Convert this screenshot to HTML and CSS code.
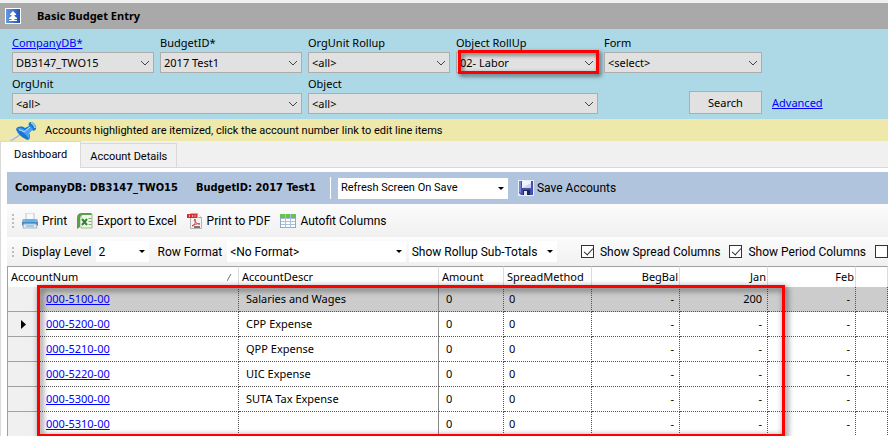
FILE: index.html
```html
<!DOCTYPE html>
<html lang="en">
<head>
<meta charset="utf-8">
<title>Basic Budget Entry</title>
<link rel="stylesheet" href="styles.css">
</head>
<body>
<header class="titlebar">
  <button class="collapse" type="button" aria-label="Collapse search panel">
    <svg width="16" height="16" viewBox="0 0 16 16">
      <defs><linearGradient id="blue" x1="0" y1="0" x2="1" y2="0"><stop offset="0" stop-color="#6a9be4"/><stop offset="1" stop-color="#1d4fb4"/></linearGradient></defs>
      <rect x="0.5" y="0.5" width="15" height="15" fill="url(#blue)" stroke="#fff"/>
      <path d="M8 3l3 3v1H9.500v1L12 10v1H9.500v1H12v1H4v-1h2.500v-1H4v-1l2.500-2V7H5V6z" fill="#fff"/>
    </svg>
  </button>
  <h1 class="title">Basic Budget Entry</h1>
</header>

<form class="search">
  <div class="field">
    <label for="company"><a href="#company">CompanyDB*</a></label>
    <div class="combo"><select id="company"><option>DB3147_TWO15</option></select><svg class="chev" viewBox="0 0 10 6"><path d="M1 1l4 4 4-4"/></svg></div>
  </div>
  <div class="field">
    <label for="budget">BudgetID*</label>
    <div class="combo"><select id="budget"><option>2017 Test1</option></select><svg class="chev" viewBox="0 0 10 6"><path d="M1 1l4 4 4-4"/></svg></div>
  </div>
  <div class="field">
    <label for="orgroll">OrgUnit Rollup</label>
    <div class="combo"><select id="orgroll"><option>&lt;all&gt;</option></select><svg class="chev" viewBox="0 0 10 6"><path d="M1 1l4 4 4-4"/></svg></div>
  </div>
  <div class="field">
    <label for="objroll">Object RollUp</label>
    <div class="combo marked"><select id="objroll"><option>02- Labor</option></select><svg class="chev" viewBox="0 0 10 6"><path d="M1 1l4 4 4-4"/></svg></div>
  </div>
  <div class="field">
    <label for="form">Form</label>
    <div class="combo"><select id="form"><option>&lt;select&gt;</option></select><svg class="chev" viewBox="0 0 10 6"><path d="M1 1l4 4 4-4"/></svg></div>
  </div>
  <div class="field wide">
    <label for="orgunit">OrgUnit</label>
    <div class="combo"><select id="orgunit"><option>&lt;all&gt;</option></select><svg class="chev" viewBox="0 0 10 6"><path d="M1 1l4 4 4-4"/></svg></div>
  </div>
  <div class="field wide">
    <label for="object">Object</label>
    <div class="combo"><select id="object"><option>&lt;all&gt;</option></select><svg class="chev" viewBox="0 0 10 6"><path d="M1 1l4 4 4-4"/></svg></div>
  </div>
  <button class="go" type="button">Search</button>
  <a class="advanced" href="#advanced">Advanced</a>
</form>

<p class="notice">
  <svg class="pin" width="30" height="20" viewBox="0 0 30 20">
    <path d="M1 19l12-8 2 2L4 20z" fill="#b9bfc2"/>
    <path d="M2 18.500l11-7" stroke="#eef2f4" stroke-width="1"/>
    <path d="M8 8c2-3 6-3 9-1l4-2c-1-2 0-4 2-4 3 0 6 4 5 7-1 2-3 2-4 1l-3 3c2 3 1 6-1 7-4-1-11-6-12-11z" fill="#1976d2"/>
    <path d="M9 8c2-2 5-1 8 1l5-4 3 3-4 4c1 2 1 4 0 6-2-4-7-8-12-10z" fill="#4ba3ee"/>
    <path d="M23 2c2 0 4 3 4 5" stroke="#8bcbfa" stroke-width="2" fill="none"/>
    <path d="M11 9c2 0 4 1 5 2l6-5" stroke="#b5e0ff" fill="none"/>
  </svg>
  <span>Accounts highlighted are itemized, click the account number link to edit line items</span>
</p>

<nav class="tabs">
  <a class="tab active" href="#dashboard">Dashboard</a>
  <a class="tab" href="#details">Account Details</a>
</nav>

<main class="panel">
  <div class="context">
    <strong class="db">CompanyDB: DB3147_TWO15</strong>
    <strong class="bid">BudgetID: 2017 Test1</strong>
    <div class="drop refresh"><select aria-label="Refresh mode"><option>Refresh Screen On Save</option></select></div>
    <button class="tool save" type="button">
      <svg width="16" height="16" viewBox="0 0 16 16"><rect width="16" height="16" fill="#e8ebf8"/><path d="M1 1h14v14H3l-2-2z" fill="#4450ae"/><path d="M1 1h2v12l-2-1z" fill="#7781d2"/><rect x="4" y="1" width="9" height="7" fill="#eef3fc"/><path d="M4 8l9-5v5z" fill="#c9d5ee"/><rect x="5" y="10" width="7" height="5" fill="#20264f"/><rect x="6" y="11" width="3" height="4" fill="#e0e4ee"/></svg>
      Save Accounts
    </button>
  </div>
  <div class="bar actions">
    <span class="grip"><i></i><i></i><i></i><i></i></span>
    <button class="tool" type="button">
      <svg width="16" height="16" viewBox="0 0 16 16"><path d="M4 0h8v8H4z" fill="#f6fafd" stroke="#bcc9d4"/><path d="M1 6h2v3h10V6h2l1 2v5H0V8z" fill="#8fb0c8"/><path d="M3 6h10v3H3z" fill="#5fb2ee"/><path d="M0 9h16v3H0z" fill="#4a8cc6"/><path d="M2 11h12l1 4H1z" fill="#e4edf4" stroke="#a5b7c6"/><path d="M4 13h8" stroke="#59a8df"/></svg>
      Print
    </button>
    <button class="tool" type="button">
      <svg width="16" height="16" viewBox="0 0 16 16"><path d="M4 1h11v14H4z" fill="#edf6e8" stroke="#9bbd89"/><path d="M11.500 5.500h3M11.500 8.500h3M11.500 11.500h3" stroke="#7eac67"/><path d="M0 16V5q0-5 5-5h9l1 2H6Q3 2 3 6v8z" fill="#5d9c4b"/><path d="M4 5h7v9l-7-1z" fill="#f4faf1"/><path d="M5 6l5 6M10 6l-5 6" stroke="#328233" stroke-width="2"/></svg>
      Export to Excel
    </button>
    <button class="tool" type="button">
      <svg width="16" height="16" viewBox="0 0 16 16"><path d="M3.500 0.500h7l4 4v11h-11z" fill="#f3f3f4" stroke="#b4b4b8"/><path d="M10.500 0.500v4h4" fill="#fff" stroke="#aaa"/><path d="M0 1h10v4H0z" fill="#d72d2d"/><path d="M2.500 2v2M5.500 2v2M8 2v2" stroke="#f4aaaa"/><path d="M5 13c3-1 4-4 3-7-2 1 1 5 5 5-3-1-6 1-8 2z" fill="none" stroke="#d33f3f"/><path d="M7 13h6v2H7z" fill="#777"/></svg>
      Print to PDF
    </button>
    <button class="tool" type="button">
      <svg width="16" height="16" viewBox="0 0 16 16"><rect x="0.5" y="1.500" width="15" height="13" fill="#fff" stroke="#8eaac8"/><path d="M0 1h16v4H0z" fill="#6cc04e"/><path d="M5.500 1v14M10.500 1v14M1 5.500h14M1 8.500h14M1 11.500h14" stroke="#a6c1de"/></svg>
      Autofit Columns
    </button>
  </div>
  <div class="bar options">
    <span class="grip"><i></i><i></i><i></i></span>
    <label class="cap" for="level">Display Level</label>
    <div class="drop level"><select id="level"><option>2</option></select></div>
    <label class="cap" for="rowformat">Row Format</label>
    <div class="drop format"><select id="rowformat"><option>&lt;No Format&gt;</option></select></div>
    <div class="drop totals"><select aria-label="Sub-totals"><option>Show Rollup Sub-Totals</option></select></div>
    <label class="check first"><input type="checkbox" checked>Show Spread Columns</label>
    <label class="check"><input type="checkbox" checked>Show Period Columns</label>
    <label class="check"><input type="checkbox" aria-label="Show more columns"></label>
  </div>

  <div class="gridwrap">
    <table class="grid">
      <colgroup><col class="c-sel"><col class="c-num"><col class="c-desc"><col class="c-amt"><col class="c-per"><col class="c-per"><col class="c-per"><col class="c-per"><col></colgroup>
      <thead>
        <tr><th colspan="2"><span class="sorted">AccountNum <svg width="5" height="7" viewBox="0 0 5 7"><path d="M0 7l4-7" stroke="#777" fill="none"/></svg></span></th><th>AccountDescr</th><th>Amount</th><th>SpreadMethod</th><th class="n">BegBal</th><th class="n">Jan</th><th class="n">Feb</th><th></th></tr>
      </thead>
      <tbody>
        <tr class="current"><td></td><td><a href="#5100">000-5100-00</a></td><td>Salaries and Wages</td><td>0</td><td>0</td><td>-</td><td>200</td><td>-</td><td></td></tr>
        <tr><td><svg class="arrow" width="5" height="9" viewBox="0 0 5 9"><path d="M0 0l5 4.500L0 9z"/></svg></td><td><a href="#5200">000-5200-00</a></td><td>CPP Expense</td><td>0</td><td>0</td><td>-</td><td>-</td><td>-</td><td></td></tr>
        <tr><td></td><td><a href="#5210">000-5210-00</a></td><td>QPP Expense</td><td>0</td><td>0</td><td>-</td><td>-</td><td>-</td><td></td></tr>
        <tr><td></td><td><a href="#5220">000-5220-00</a></td><td>UIC Expense</td><td>0</td><td>0</td><td>-</td><td>-</td><td>-</td><td></td></tr>
        <tr><td></td><td><a href="#5300">000-5300-00</a></td><td>SUTA Tax Expense</td><td>0</td><td>0</td><td>-</td><td>-</td><td>-</td><td></td></tr>
        <tr><td></td><td><a href="#5310">000-5310-00</a></td><td></td><td>0</td><td>0</td><td>-</td><td>-</td><td>-</td><td></td></tr>
      </tbody>
    </table>
    <div class="callout"></div>
  </div>
</main>
</body>
</html>
```
FILE: styles.css
```css
* { box-sizing: border-box; }

body {
  margin: 0;
  padding-top: 3px;
  min-height: 100vh;
  overflow: hidden;
  background: #f0f0f0;
  color: #000;
  font: 11px/14px "Noto Sans", sans-serif;
}

button, select, input { font: inherit; color: inherit; margin: 0; }
svg { display: block; flex: none; }
a { color: #00f; }

.titlebar {
  display: flex;
  align-items: center;
  gap: 16px;
  height: 26px;
  padding-left: 5px;
  background: #a9a9a9;
}
.collapse { padding: 0; border: 0; background: none; }
.title { margin: 0; font-size: 11px; line-height: 16px; font-weight: 700; }

.search {
  display: grid;
  grid-template-columns: repeat(4, 142px) 158px auto;
  column-gap: 6px;
  row-gap: 4px;
  justify-content: start;
  align-content: start;
  height: 90px;
  padding: 7px 12px 0;
  background: #add8e6;
}
.field { display: flex; flex-direction: column; gap: 2px; }
.wide { grid-column: span 2; }
.combo { position: relative; }
.combo select {
  display: block;
  appearance: none;
  width: 100%;
  height: 21px;
  padding: 0 20px 0 3px;
  border: 1px solid #adadad;
  border-radius: 0;
  background: #e1e1e1;
}
.chev {
  position: absolute;
  right: 4px;
  top: 8px;
  width: 10px;
  height: 6px;
  fill: none;
  stroke: #444;
  pointer-events: none;
}
.marked::after {
  content: "";
  position: absolute;
  inset: -2px -1px -1px 2px;
  border: 3px solid #f00;
  filter: drop-shadow(2px 2px 2px rgba(0, 0, 0, 0.6));
  pointer-events: none;
}
.go {
  justify-self: end;
  align-self: end;
  width: 73px;
  height: 23px;
  padding: 0;
  border: 1px solid #adadad;
  background: #e1e1e1;
}
.advanced { align-self: end; margin: 0 0 4px 4px; }

.notice, .tabs, .refresh { font-family: Roboto, sans-serif; }

.notice {
  display: flex;
  align-items: center;
  gap: 7px;
  height: 22px;
  margin: 0;
  padding-left: 8px;
  background: #eee8aa;
}
.notice span { padding-top: 2px; }
.pin { align-self: end; }

.tabs {
  display: flex;
  align-items: flex-end;
  height: 27px;
  box-shadow: inset 0 -1px #d9d9d9;
}
.tab {
  height: 25px;
  padding: 6px 9px 5px;
  border: 1px solid #d9d9d9;
  border-left: 0;
  color: #000;
  text-decoration: none;
}
.tab.active {
  height: 27px;
  padding: 6px 13px 5px;
  border-left: 1px solid #d9d9d9;
  border-bottom: 0;
  background: #fff;
}

.panel {
  padding: 4px 0 0 6px;
  border-left: 1px solid #d9d9d9;
  background: #fff;
}

.context {
  display: flex;
  align-items: center;
  height: 32px;
  padding-left: 8px;
  background: #b0c4de;
}
.context strong { font-family: "DejaVu Sans Condensed", "DejaVu Sans", sans-serif; white-space: nowrap; }
.bid { margin-left: 18px; padding-right: 14px; border-right: 1px solid #fff; line-height: 22px; }
.tool {
  display: flex;
  align-items: center;
  gap: 3px;
  padding: 0;
  border: 0;
  background: none;
  font-family: Roboto, sans-serif;
  font-size: 12px;
  line-height: 16px;
}
.save { margin-left: 10px; }

.drop { position: relative; background: #fff; }
.drop select {
  display: block;
  appearance: none;
  width: 100%;
  height: 21px;
  padding: 0 16px 0 3px;
  border: 0;
  border-radius: 0;
  background: none;
}
.drop::after {
  content: "";
  position: absolute;
  right: 4px;
  top: 9px;
  border: 3px solid transparent;
  border-top-color: #000;
  border-bottom: 0;
  pointer-events: none;
}
.refresh { width: 170px; margin-left: 7px; }

.bar {
  display: flex;
  align-items: center;
  background: linear-gradient(#fcfcfc, #f0f0f0);
}
.actions { height: 33px; gap: 10px; padding-left: 5px; }
.options { height: 29px; padding-left: 5px; font: 12px/16px Roboto, sans-serif; white-space: nowrap; }
.grip { display: grid; gap: 2px; width: 2px; }
.grip i { width: 2px; height: 2px; background: #bdbdbd; }
.actions .grip { margin-right: -2px; }
.cap { margin-left: 8px; }
.level { width: 55px; margin-left: 4px; }
.format { width: 182px; margin-left: 5px; }
.totals { width: 151px; margin-left: 3px; }
.check { display: flex; align-items: center; gap: 6px; margin-left: 9px; }
.first { margin-left: 24px; }
.check input {
  appearance: none;
  flex: none;
  position: relative;
  width: 13px;
  height: 13px;
  border: 1px solid #333;
  background: #fff;
}
.check input:checked::after {
  content: "";
  position: absolute;
  left: 4px;
  top: 0;
  width: 4px;
  height: 8px;
  border: solid #333;
  border-width: 0 1px 1px 0;
  transform: rotate(42deg);
}

.actions .tool { gap: 4px; }

.gridwrap { position: relative; }
.grid {
  width: 100%;
  table-layout: fixed;
  border-collapse: separate;
  border-spacing: 0;
  border-left: 1px solid #a0a0a0;
}
.c-sel { width: 30px; }
.c-num { width: 201px; }
.c-desc { width: 200px; }
.c-amt { width: 65px; }
.c-per { width: 88px; }
.grid th {
  height: 21px;
  padding: 0 3px;
  border-top: 1px solid #a0a0a0;
  border-right: 1px solid #dcdcdc;
  text-align: left;
  font-weight: 400;
  white-space: nowrap;
}
.grid th.n { padding-right: 1px; text-align: right; }
.sorted { display: flex; align-items: center; justify-content: space-between; padding-right: 3px; }
.grid td {
  height: 25px;
  padding: 0 7px;
  border-right: 1px dotted #555;
  border-bottom: 1px dotted #555;
}
.grid td:first-child {
  padding: 0 0 0 13px;
  border-right: 1px solid #a0a0a0;
  border-bottom: 1px solid #a0a0a0;
  background: #f0f0f0;
}
.grid td:nth-child(2) { padding-left: 8px; }
.grid td:nth-child(3) { border-right: 1px solid #888; }
.grid td:nth-child(5) { padding-left: 5px; }
.grid td:nth-child(n+6) { padding-right: 5px; text-align: right; }
.grid .current td:nth-child(n+2) { background: #ccc; }

.callout {
  position: absolute;
  left: 30px;
  top: 19px;
  width: 748px;
  bottom: 0;
  border: 3px solid #f00;
  filter: drop-shadow(2px 2px 3px rgba(0, 0, 0, 0.7));
  pointer-events: none;
}
```
